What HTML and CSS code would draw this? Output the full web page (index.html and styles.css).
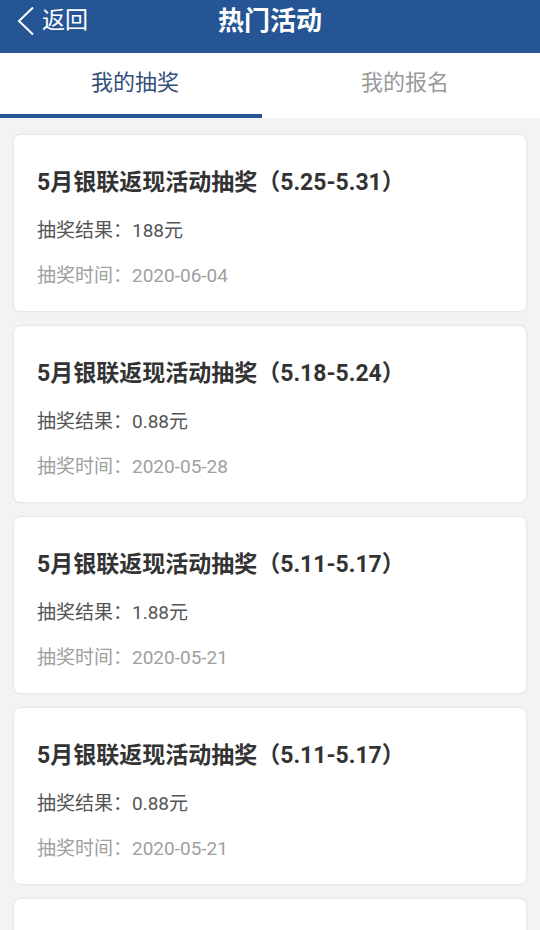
FILE: index.html
```html
<!DOCTYPE html>
<html>
<head>
	<meta charset="utf-8">
	<title>热门活动</title>
	<link rel="stylesheet" href="styles.css">
</head>

<body>
	<div class="header">
		<a class="back" href="#">
			<svg class="back-icon" width="20" height="30" viewBox="0 0 20 30">
				<polyline points="17,1.5 3,15 17,28.5" fill="none" stroke="#fff" stroke-width="2" stroke-linejoin="miter"/>
			</svg>
			<span>返回</span>
		</a>
		<h1>热门活动</h1>
	</div>

	<div class="tabs">
		<div class="tab-row">
			<div class="tab active">我的抽奖</div>
			<div class="tab">我的报名</div>
		</div>
		<div class="tab-line"></div>
	</div>

	<div class="list">
		<div class="card">
			<div class="card-title">5月银联返现活动抽奖（5.25-5.31）</div>
			<div class="card-result">抽奖结果：188元</div>
			<div class="card-time">抽奖时间：2020-06-04</div>
		</div>
		<div class="card">
			<div class="card-title">5月银联返现活动抽奖（5.18-5.24）</div>
			<div class="card-result">抽奖结果：0.88元</div>
			<div class="card-time">抽奖时间：2020-05-28</div>
		</div>
		<div class="card">
			<div class="card-title">5月银联返现活动抽奖（5.11-5.17）</div>
			<div class="card-result">抽奖结果：1.88元</div>
			<div class="card-time">抽奖时间：2020-05-21</div>
		</div>
		<div class="card">
			<div class="card-title">5月银联返现活动抽奖（5.11-5.17）</div>
			<div class="card-result">抽奖结果：0.88元</div>
			<div class="card-time">抽奖时间：2020-05-21</div>
		</div>
		<div class="card">
			<div class="card-title">5月银联返现活动抽奖（5.04-5.10）</div>
			<div class="card-result">抽奖结果：0.88元</div>
			<div class="card-time">抽奖时间：2020-05-14</div>
		</div>
	</div>
</body>
</html>
```

FILE: styles.css
```css
/* styles.css */
body {
	margin: 0;
	background: #f3f3f3;
	font-family: Roboto, "Noto Sans CJK SC", sans-serif;
	overflow: hidden;
}

.header {
	position: relative;
	height: 53px;
	background-color: #255594;
	color: #fff;
	display: flex;
	justify-content: center;
}

.header h1 {
	margin: 0;
	font-size: 26px;
	line-height: 42px;
	font-weight: bold;
}

.back {
	position: absolute;
	left: 16px;
	top: 6px;
	display: flex;
	align-items: center;
	gap: 6px;
	color: #fff;
	text-decoration: none;
	font-size: 23px;
	line-height: 30px;
}

.back-icon {
	display: block;
}

.tabs {
	background-color: #fff;
	height: 65px;
}

.tab-row {
	display: flex;
	height: 61px;
}

.tab {
	flex: 1;
	text-align: center;
	font-size: 22px;
	line-height: 60px;
	color: #999;
}

.tab.active {
	color: #34507a;
}

.tab-line {
	width: 262px;
	height: 4px;
	background-color: #255594;
}

.list {
	padding: 17px 14px 0;
}

.card {
	background-color: #fff;
	border-radius: 6px;
	box-shadow: 0 0 2px rgba(0, 0, 0, 0.18);
	padding: 33px 23px 21px;
	margin-bottom: 15px;
}

.card-title {
	font-size: 23px;
	line-height: 30px;
	font-weight: bold;
	color: #333;
}

.card-result {
	margin-top: 19px;
	font-size: 19px;
	line-height: 28px;
	color: #555;
}

.card-time {
	margin-top: 17px;
	font-size: 19px;
	line-height: 28px;
	color: #a0a0a0;
}
```
